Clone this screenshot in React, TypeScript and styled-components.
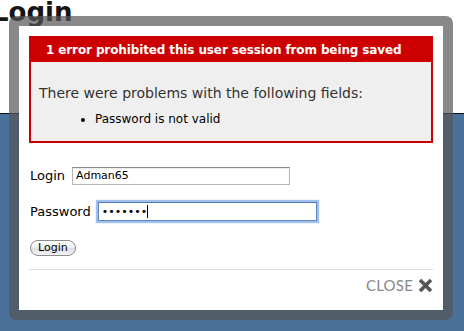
import React from 'react'
import styled, { createGlobalStyle } from 'styled-components'

const GlobalStyle = createGlobalStyle`
  html, body {
    margin: 0;
    padding: 0;
    background: #fff;
    overflow: hidden;
  }
  * {
    box-sizing: border-box;
  }
`

const Page = styled.div`
  position: relative;
  width: 464px;
  height: 331px;
  display: flex;
  flex-direction: column;
  font-family: 'DejaVu Sans', Verdana, sans-serif;
`

const Header = styled.div`
  height: 113px;
  background: #fff;
`

const Title = styled.h1`
  margin: -3px 0 0 -8px;
  font-family: 'DejaVu Sans', Verdana, sans-serif;
  font-weight: 700;
  font-size: 26px;
  color: #151515;
`

const Band = styled.div`
  flex: 1;
  background: #4b719b;
  border-top: 1px solid #111;
`

// the modal sits over the page, so it is placed on top of it
const Overlay = styled.div`
  position: absolute;
  top: 16px;
  left: 9px;
  width: 444px;
  height: 304px;
  padding: 10px;
  border-radius: 7px;
  background: rgba(85, 85, 85, 0.7);
`

const Dialog = styled.div`
  height: 100%;
  background: #fff;
  padding: 10px;
  display: flex;
  flex-direction: column;
`

const ErrorBox = styled.div`
  border: 2px solid #cc0000;
  background: #efefef;
`

const ErrorTitle = styled.h2`
  margin: 0;
  margin-top: -2px;
  height: 26px;
  padding: 2px 5px 0 15px;
  line-height: 24px;
  background: #cc0000;
  color: #fff;
  font-size: 12px;
  font-weight: 700;
  letter-spacing: -0.12px;
  white-space: nowrap;
`

const ErrorBody = styled.div`
  padding: 23px 8px 14px;
  color: #333;
`

const ErrorIntro = styled.p`
  margin: 0;
  font-size: 14px;
  line-height: 16px;
`

const ErrorList = styled.ul`
  margin: 11px 0 0;
  padding-left: 56px;
  color: #000;
  font-size: 12px;
  line-height: 15px;
`

const Form = styled.form`
  display: flex;
  flex-direction: column;
  padding-top: 23px;
  padding-left: 1px;
`

const Field = styled.div<{ gap: number }>`
  display: flex;
  align-items: center;
  height: 19px;
  margin-bottom: ${({ gap }) => gap}px;
`

const Label = styled.label`
  font-size: 13px;
  color: #000;
  margin-right: 7px;
`

const InputWrap = styled.div`
  position: relative;
  display: flex;
`

const TextInput = styled.input<{ focused?: boolean }>`
  height: ${({ focused }) => (focused ? 19 : 18)}px;
  padding: 0 3px;
  font-family: 'DejaVu Sans', Verdana, sans-serif;
  font-size: 11px;
  color: #000;
  background: #fff;
  outline: none;
  border: 1px solid ${({ focused }) => (focused ? '#5b87c6' : '#b8b8b8')};
  border-top-color: ${({ focused }) => (focused ? '#4f7bbd' : '#8a8a8a')};
  box-shadow: ${({ focused }) =>
    focused ? '0 0 1px 2px rgba(110, 160, 225, 0.65)' : 'inset 0 1px 1px rgba(0,0,0,0.08)'};
`

const Caret = styled.span`
  position: absolute;
  left: 49px;
  top: 3px;
  width: 1px;
  height: 13px;
  background: #000;
`

const ButtonRow = styled.div`
  display: flex;
  height: 17px;
  align-items: center;
`

const Button = styled.button`
  height: 16px;
  padding: 0 7px;
  border: 1px solid #8c8c8c;
  border-radius: 9px;
  background: linear-gradient(#ffffff 0%, #f1f1f1 45%, #dedede 55%, #f4f4f4 100%);
  font-family: 'DejaVu Sans', Verdana, sans-serif;
  font-size: 11px;
  line-height: 14px;
  color: #000;
`

const Divider = styled.hr`
  margin: 13px 0 0;
  border: 0;
  border-top: 1px solid #dcdcdc;
`

const Footer = styled.div`
  display: flex;
  justify-content: flex-end;
  align-items: center;
  height: 32px;
  gap: 5px;
`

const CloseText = styled.span`
  font-family: Lato, 'Open Sans', sans-serif;
  font-size: 15px;
  color: #888;
  letter-spacing: 0.2px;
`

function CloseIcon() {
  return (
    <svg width="15" height="15" viewBox="0 0 15 15">
      <path d="M2 2 L13 13 M13 2 L2 13" stroke="#555" strokeWidth="3.6" />
    </svg>
  )
}

export default function App() {
  return (
    <>
      <GlobalStyle />
      <Page>
        <Header>
          <Title>Login</Title>
        </Header>
        <Band />

        <Overlay>
          <Dialog>
            <ErrorBox>
              <ErrorTitle>1 error prohibited this user session from being saved</ErrorTitle>
              <ErrorBody>
                <ErrorIntro>There were problems with the following fields:</ErrorIntro>
                <ErrorList>
                  <li>Password is not valid</li>
                </ErrorList>
              </ErrorBody>
            </ErrorBox>

            <Form onSubmit={e => e.preventDefault()}>
              <Field gap={17}>
                <Label>Login</Label>
                <TextInput style={{ width: 218 }} defaultValue="Adman65" readOnly />
              </Field>
              <Field gap={18}>
                <Label>Password</Label>
                <InputWrap>
                  <TextInput focused type="password" style={{ width: 219 }} defaultValue="1234567" readOnly />
                  <Caret />
                </InputWrap>
              </Field>
              <ButtonRow>
                <Button type="submit">Login</Button>
              </ButtonRow>
            </Form>

            <Divider />
            <Footer>
              <CloseText>CLOSE</CloseText>
              <CloseIcon />
            </Footer>
          </Dialog>
        </Overlay>
      </Page>
    </>
  )
}
